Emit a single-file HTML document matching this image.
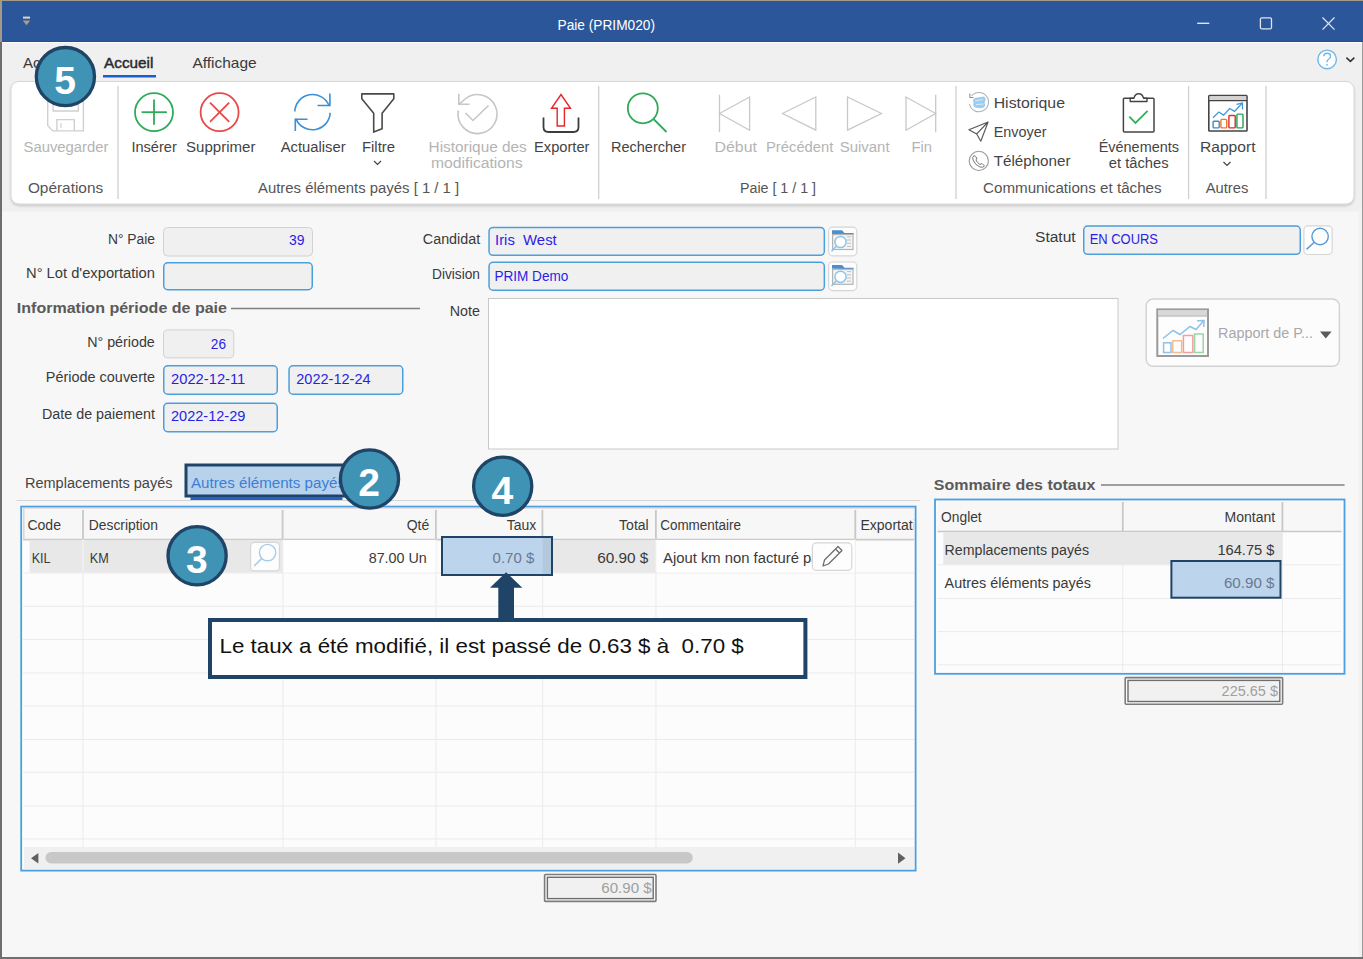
<!DOCTYPE html>
<html><head><meta charset="utf-8"><title>Paie (PRIM020)</title>
<style>html,body{margin:0;padding:0;background:#f7f7f7;overflow:hidden}svg{display:block}text{font-family:"Liberation Sans",sans-serif}</style>
</head><body>
<svg width="1363" height="959" viewBox="0 0 1363 959">
<rect x="0" y="0" width="1363" height="959" fill="#f7f7f7" />
<rect x="0" y="0" width="1363" height="42" fill="#2b579a" />
<rect x="0" y="41" width="1363" height="1" fill="#21509a" />
<rect x="0" y="0" width="1363" height="1" fill="#a39a8c" />
<rect x="0" y="0" width="2" height="42" fill="#a39a8c" />
<g font-family="Liberation Sans, sans-serif">
<text x="557.50" y="29.60" font-size="15.5" fill="#ffffff" font-weight="normal" textLength="97.50" lengthAdjust="spacingAndGlyphs" >Paie (PRIM020)</text>
</g>
<rect x="23" y="16.6" width="7" height="2.0" fill="#dcd4c4" />
<path d="M22.8 20.6 L30.2 20.6 L26.5 25.3 Z" stroke="none" stroke-width="1" fill="#a89c8c" />
<line x1="1197.2" y1="23.3" x2="1209.3" y2="23.3" stroke="#dfe4ee" stroke-width="1.4" />
<rect x="1260.4" y="17.8" width="11.099999999999909" height="11.099999999999998" fill="none" stroke="#dfe4ee" stroke-width="1.3" rx="1.5" />
<line x1="1322.5" y1="17.5" x2="1334.5" y2="29.6" stroke="#dfe4ee" stroke-width="1.3" />
<line x1="1334.5" y1="17.5" x2="1322.5" y2="29.6" stroke="#dfe4ee" stroke-width="1.3" />
<rect x="2" y="42" width="1360" height="169.5" fill="#f0f0f0" />
<rect x="1358.8" y="211.5" width="3.2000000000000455" height="747.5" fill="#f2f2f2" />
<rect x="2" y="42" width="1360" height="1" fill="#fbfbf8" />
<g font-family="Liberation Sans, sans-serif">
<text x="23.00" y="68.20" font-size="15" fill="#3a3a3a" font-weight="normal" >Ac</text>
<text x="104.00" y="68.20" font-size="15" fill="#2a2a2a" font-weight="normal" textLength="49.40" lengthAdjust="spacingAndGlyphs" stroke="#2a2a2a" stroke-width="0.45">Accueil</text>
<text x="192.40" y="68.20" font-size="15" fill="#3a3a3a" font-weight="normal" textLength="64.30" lengthAdjust="spacingAndGlyphs" >Affichage</text>
</g>
<rect x="103" y="75" width="53" height="2.5" fill="#1a5fd0" />
<circle cx="1327.1" cy="59.4" r="9.3" stroke="#70b6e6" stroke-width="1.4" fill="#ffffff" />
<path d="M1323.8 56.2 Q1324 53.3 1327.2 53.3 Q1330.5 53.3 1330.5 56.3 Q1330.5 58.3 1328.3 59.5 Q1327 60.3 1327 62.2" stroke="#70b6e6" stroke-width="1.4" fill="none" />
<circle cx="1327" cy="64.8" r="0.9" stroke="none" stroke-width="1" fill="#70b6e6" />
<path d="M1346.4 57.6 L1350.4 61.4 L1354.4 57.6" stroke="#333" stroke-width="1.5" fill="none" />
<defs><filter id="sh" x="-5%" y="-20%" width="110%" height="140%"><feDropShadow dx="0" dy="1.5" stdDeviation="1.2" flood-color="#000" flood-opacity="0.18"/></filter></defs>
<rect x="11" y="81.5" width="1343" height="122.5" fill="#ffffff" stroke="#d6d6d6" stroke-width="1" rx="8" filter="url(#sh)"/>
<line x1="118" y1="86" x2="118" y2="199" stroke="#d0d0d0" stroke-width="1.3" />
<line x1="598.7" y1="86" x2="598.7" y2="199" stroke="#d0d0d0" stroke-width="1.3" />
<line x1="956" y1="86" x2="956" y2="199" stroke="#d0d0d0" stroke-width="1.3" />
<line x1="1188.6" y1="86" x2="1188.6" y2="199" stroke="#d0d0d0" stroke-width="1.3" />
<line x1="1266" y1="86" x2="1266" y2="199" stroke="#d0d0d0" stroke-width="1.3" />
<g font-family="Liberation Sans, sans-serif">
<text x="23.50" y="151.90" font-size="14" fill="#b4b4b4" font-weight="normal" textLength="85.00" lengthAdjust="spacingAndGlyphs" >Sauvegarder</text>
<text x="27.90" y="193.00" font-size="14" fill="#555" font-weight="normal" textLength="75.30" lengthAdjust="spacingAndGlyphs" >Opérations</text>
<text x="131.40" y="151.50" font-size="14" fill="#444444" font-weight="normal" textLength="45.40" lengthAdjust="spacingAndGlyphs" >Insérer</text>
<text x="186.00" y="151.50" font-size="14" fill="#444444" font-weight="normal" textLength="69.40" lengthAdjust="spacingAndGlyphs" >Supprimer</text>
<text x="280.70" y="151.50" font-size="14" fill="#444444" font-weight="normal" textLength="64.90" lengthAdjust="spacingAndGlyphs" >Actualiser</text>
<text x="362.00" y="151.50" font-size="14" fill="#444444" font-weight="normal" textLength="33.00" lengthAdjust="spacingAndGlyphs" >Filtre</text>
<text x="428.60" y="151.50" font-size="14" fill="#b4b4b4" font-weight="normal" textLength="98.20" lengthAdjust="spacingAndGlyphs" >Historique des</text>
<text x="431.00" y="168.00" font-size="14" fill="#b4b4b4" font-weight="normal" textLength="91.70" lengthAdjust="spacingAndGlyphs" >modifications</text>
<text x="534.00" y="151.50" font-size="14" fill="#444444" font-weight="normal" textLength="55.50" lengthAdjust="spacingAndGlyphs" >Exporter</text>
<text x="258.00" y="193.00" font-size="14" fill="#555" font-weight="normal" textLength="201.20" lengthAdjust="spacingAndGlyphs" >Autres éléments payés [ 1 / 1 ]</text>
<text x="611.00" y="151.50" font-size="14" fill="#444444" font-weight="normal" textLength="75.00" lengthAdjust="spacingAndGlyphs" >Rechercher</text>
<text x="714.50" y="151.70" font-size="14" fill="#b4b4b4" font-weight="normal" textLength="42.40" lengthAdjust="spacingAndGlyphs" >Début</text>
<text x="766.00" y="151.70" font-size="14" fill="#b4b4b4" font-weight="normal" textLength="67.40" lengthAdjust="spacingAndGlyphs" >Précédent</text>
<text x="839.70" y="151.70" font-size="14" fill="#b4b4b4" font-weight="normal" textLength="49.90" lengthAdjust="spacingAndGlyphs" >Suivant</text>
<text x="911.50" y="151.70" font-size="14" fill="#b4b4b4" font-weight="normal" textLength="20.50" lengthAdjust="spacingAndGlyphs" >Fin</text>
<text x="740.00" y="193.00" font-size="14" fill="#555" font-weight="normal" textLength="76.00" lengthAdjust="spacingAndGlyphs" >Paie [ 1 / 1 ]</text>
<text x="993.70" y="107.50" font-size="14" fill="#444444" font-weight="normal" textLength="71.30" lengthAdjust="spacingAndGlyphs" >Historique</text>
<text x="993.70" y="136.80" font-size="14" fill="#444444" font-weight="normal" textLength="52.80" lengthAdjust="spacingAndGlyphs" >Envoyer</text>
<text x="993.70" y="166.00" font-size="14" fill="#444444" font-weight="normal" textLength="76.80" lengthAdjust="spacingAndGlyphs" >Téléphoner</text>
<text x="1098.70" y="151.60" font-size="14" fill="#444444" font-weight="normal" textLength="80.30" lengthAdjust="spacingAndGlyphs" >Événements</text>
<text x="1108.80" y="168.00" font-size="14" fill="#444444" font-weight="normal" textLength="59.80" lengthAdjust="spacingAndGlyphs" >et tâches</text>
<text x="983.00" y="192.50" font-size="14" fill="#555" font-weight="normal" textLength="178.60" lengthAdjust="spacingAndGlyphs" >Communications et tâches</text>
<text x="1200.00" y="151.60" font-size="14" fill="#444444" font-weight="normal" textLength="55.50" lengthAdjust="spacingAndGlyphs" >Rapport</text>
<text x="1205.70" y="192.50" font-size="14" fill="#555" font-weight="normal" textLength="42.70" lengthAdjust="spacingAndGlyphs" >Autres</text>
</g>
<path d="M374 161 L377.5 164.5 L381 161" stroke="#444" stroke-width="1.2" fill="none" />
<path d="M1223.5 162 L1227 165.5 L1230.5 162" stroke="#444" stroke-width="1.2" fill="none" />
<path d="M47.7 94 L83.4 94 L83.4 130.9 L52.7 130.9 L47.7 125.5 Z" stroke="#d0d0d0" stroke-width="1.4" fill="none" />
<path d="M53.1 94 L53.1 111 L78.3 111 L78.3 94" stroke="#d0d0d0" stroke-width="1.4" fill="none" />
<path d="M56.9 130.9 L56.9 119.6 L74.3 119.6 L74.3 130.9" stroke="#d0d0d0" stroke-width="1.4" fill="none" />
<line x1="60.9" y1="123.2" x2="60.9" y2="128.1" stroke="#d0d0d0" stroke-width="1.2" />
<circle cx="154" cy="112.2" r="19" stroke="#2faa58" stroke-width="1.8" fill="none" />
<line x1="141.6" y1="112.2" x2="166.9" y2="112.2" stroke="#2faa58" stroke-width="1.8" />
<line x1="154" y1="99.4" x2="154" y2="124.7" stroke="#2faa58" stroke-width="1.8" />
<circle cx="219.6" cy="112.2" r="19" stroke="#e8494b" stroke-width="1.8" fill="none" />
<line x1="210" y1="102.6" x2="229.2" y2="121.8" stroke="#e8494b" stroke-width="1.8" />
<line x1="229.2" y1="102.6" x2="210" y2="121.8" stroke="#e8494b" stroke-width="1.8" />
<path d="M294.8 111.5 A17.8 17.8 0 0 1 328.9 105.2 L329.9 105.5" stroke="#3a90d6" stroke-width="1.6" fill="none" />
<path d="M330.2 112.8 A17.8 17.8 0 0 1 296.2 119.3 L295.3 119.3" stroke="#3a90d6" stroke-width="1.6" fill="none" />
<path d="M329.9 93.6 L329.9 105.5 L317.5 105.5" stroke="#3a90d6" stroke-width="1.6" fill="none" />
<path d="M295.3 131 L295.3 119.3 L307.5 119.3" stroke="#3a90d6" stroke-width="1.6" fill="none" />
<path d="M361.8 93.9 L393.8 93.9 L393.8 98.7 L382.1 113.2 L382.1 128.8 L373.7 132.1 L373.7 113.2 L361.8 98.7 Z" stroke="#4a4a4a" stroke-width="1.6" fill="none" stroke-linejoin="round"/>
<path d="M458.3 110.5 A19.5 19.5 0 1 0 464.5 99.5 L459 104.3" stroke="#c6c6c6" stroke-width="1.6" fill="none" />
<path d="M458.8 93.8 L458.8 104.3 L469.5 104.3" stroke="#c6c6c6" stroke-width="1.6" fill="none" />
<path d="M465.5 113 L473 120.5 L488.5 105.5" stroke="#c6c6c6" stroke-width="1.6" fill="none" />
<path d="M561 94.5 L570.5 108.3 L564.4 108.3 L564.4 126 L557.2 126 L557.2 108.3 L551.5 108.3 Z" stroke="#e8262a" stroke-width="1.4" fill="none" stroke-linejoin="miter"/>
<path d="M543.5 117.5 L543.5 127 Q543.5 132 548.5 132 L573.5 132 Q578.5 132 578.5 127 L578.5 117.5" stroke="#3d3d3d" stroke-width="1.8" fill="none" />
<circle cx="642.8" cy="108.3" r="15" stroke="#2faa58" stroke-width="1.8" fill="none" />
<line x1="653.5" y1="119" x2="666.5" y2="132" stroke="#2faa58" stroke-width="1.8" />
<line x1="719.5" y1="94.8" x2="719.5" y2="132.2" stroke="#c8c8c8" stroke-width="1.3" />
<path d="M719.5 113.5 L749.6 97 L749.6 130.2 Z" stroke="#c8c8c8" stroke-width="1.3" fill="none" stroke-linejoin="miter"/>
<path d="M782.5 113.5 L815.8 97 L815.8 130.2 Z" stroke="#c8c8c8" stroke-width="1.3" fill="none" />
<path d="M881.5 113.5 L847.5 97 L847.5 130.2 Z" stroke="#c8c8c8" stroke-width="1.3" fill="none" />
<line x1="935.7" y1="94.8" x2="935.7" y2="132.2" stroke="#c8c8c8" stroke-width="1.3" />
<path d="M935.7 113.5 L906 97 L906 130.2 Z" stroke="#c8c8c8" stroke-width="1.3" fill="none" />
<path d="M971.5 96 A9.6 9.6 0 1 1 969.5 104" stroke="#b0b0b0" stroke-width="1.1" fill="none" />
<path d="M969.8 93.5 L969.8 97.5 L973.5 97.5" stroke="#888" stroke-width="1" fill="none" />
<path d="M973 100 Q974 97 978 97.5 L984 96.5 Q986 97.5 985.5 100 L984.5 103 Q986 105 984 107.5 Q980 109 975 107.5 Q972.5 106 973.5 103.5 Z" stroke="none" stroke-width="1" fill="#9ccdf0" />
<path d="M975 101 L983 99.5 M976 104.5 L983.5 104" stroke="#d8ecfa" stroke-width="1" fill="none" />
<path d="M988.1 122 L968.9 129.7 L976.7 133.9 L980.8 141.2 Z M976.7 133.9 L988.1 122" stroke="#555" stroke-width="1.1" fill="none" stroke-linejoin="round"/>
<circle cx="978.8" cy="160.9" r="9.6" stroke="#999" stroke-width="1.1" fill="none" />
<path d="M974 155.5 Q972 157 973 160 Q975 165 980 167 Q983 168 984.5 166 L982 163.5 L980 164.5 Q977 162.5 976 160 L977 158 Z" stroke="#777" stroke-width="1" fill="none" />
<rect x="1123.4" y="98.2" width="30.59999999999991" height="33.8" fill="none" stroke="#444" stroke-width="1.5" rx="1" />
<path d="M1130.2 98.2 L1130.2 101.5 L1147 101.5 L1147 98.2 L1143.5 98.2 Q1142.5 93.8 1138.7 93.8 Q1134.9 93.8 1134 98.2 Z" stroke="#444" stroke-width="1.4" fill="#fff" stroke-linejoin="round"/>
<path d="M1129.3 116.6 L1135.5 123 L1147.6 110.8" stroke="#2cb45a" stroke-width="1.8" fill="none" />
<rect x="1208.8" y="95.5" width="38.200000000000045" height="35.5" fill="#ffffff" stroke="#444" stroke-width="1.6" rx="0.8" />
<rect x="1209.6" y="96.3" width="36.600000000000136" height="4.0" fill="#d4d2d0" />
<line x1="1208.8" y1="100.6" x2="1247" y2="100.6" stroke="#444" stroke-width="1.1" />
<path d="M1213 117.7 L1218.8 112 L1223.6 115.1 L1229.7 108.5 L1234.5 111.4 L1242.4 103" stroke="#3f98d8" stroke-width="1.3" fill="none" />
<path d="M1236.5 104.3 L1242.4 103 L1242.6 109.5" stroke="#3f98d8" stroke-width="1.3" fill="none" />
<rect x="1213.1" y="121.2" width="6.100000000000136" height="6.700000000000003" fill="none" stroke="#3d8ad0" stroke-width="1.4" rx="0.8" />
<rect x="1220.9" y="119.4" width="5.7999999999999545" height="8.5" fill="none" stroke="#ee7a28" stroke-width="1.4" rx="0.8" />
<rect x="1228.9" y="115.5" width="6.2999999999999545" height="12.400000000000006" fill="none" stroke="#e42a2a" stroke-width="1.4" rx="0.8" />
<rect x="1236.9" y="114.1" width="6.099999999999909" height="13.800000000000011" fill="none" stroke="#22a450" stroke-width="1.4" rx="0.8" />
<rect x="163.5" y="227.5" width="149.0" height="28.5" fill="#f0f0f0" stroke="#d2d2d2" stroke-width="1" rx="4" />
<rect x="163.75" y="262.75" width="148.5" height="27.0" fill="#f0f0f0" stroke="#4b9fdc" stroke-width="1.5" rx="4" />
<rect x="163.5" y="329.9" width="70.30000000000001" height="28.0" fill="#f0f0f0" stroke="#d2d2d2" stroke-width="1" rx="4" />
<rect x="163.75" y="365.75" width="113.5" height="28.5" fill="#f0f0f0" stroke="#4b9fdc" stroke-width="1.5" rx="4" />
<rect x="289.05" y="365.75" width="113.69999999999999" height="28.5" fill="#f0f0f0" stroke="#4b9fdc" stroke-width="1.5" rx="4" />
<rect x="163.75" y="403.25" width="113.5" height="28.399999999999977" fill="#f0f0f0" stroke="#4b9fdc" stroke-width="1.5" rx="4" />
<rect x="489.05" y="227.45" width="335.3" height="27.900000000000034" fill="#f0f0f0" stroke="#4b9fdc" stroke-width="1.5" rx="4" />
<rect x="489.05" y="262.25" width="335.3" height="27.899999999999977" fill="#f0f0f0" stroke="#4b9fdc" stroke-width="1.5" rx="4" />
<rect x="828.6" y="227.2" width="28.199999999999932" height="28.599999999999994" fill="#fdfdfd" stroke="#d6d6d6" stroke-width="1.2" rx="4" />
<rect x="828.6" y="262.0" width="28.199999999999932" height="28.599999999999966" fill="#fdfdfd" stroke="#d6d6d6" stroke-width="1.2" rx="4" />
<rect x="488.5" y="298.5" width="629.5" height="150.5" fill="#ffffff" stroke="#c9c9c9" stroke-width="1" />
<rect x="1083.75" y="226.05" width="216.5" height="28.299999999999983" fill="#f0f0f0" stroke="#4b9fdc" stroke-width="1.5" rx="4" />
<rect x="1303.8999999999999" y="225.9" width="28.300000000000182" height="28.599999999999994" fill="#fdfdfd" stroke="#d6d6d6" stroke-width="1.2" rx="4" />
<g font-family="Liberation Sans, sans-serif">
<text x="108.00" y="243.50" font-size="14" fill="#3a3a3a" font-weight="normal" textLength="47.00" lengthAdjust="spacingAndGlyphs" >N° Paie</text>
<text x="288.90" y="244.60" font-size="14" fill="#2a1ee6" font-weight="normal" textLength="15.50" lengthAdjust="spacingAndGlyphs" >39</text>
<text x="26.00" y="277.50" font-size="14" fill="#3a3a3a" font-weight="normal" textLength="129.00" lengthAdjust="spacingAndGlyphs" >N° Lot d'exportation</text>
<text x="16.80" y="313.00" font-size="14.5" fill="#5a5a5a" font-weight="bold" textLength="210.20" lengthAdjust="spacingAndGlyphs" >Information période de paie</text>
<text x="87.20" y="347.00" font-size="14" fill="#3a3a3a" font-weight="normal" textLength="67.60" lengthAdjust="spacingAndGlyphs" >N° période</text>
<text x="210.80" y="348.50" font-size="14" fill="#2a1ee6" font-weight="normal" textLength="15.20" lengthAdjust="spacingAndGlyphs" >26</text>
<text x="45.80" y="382.40" font-size="14" fill="#3a3a3a" font-weight="normal" textLength="109.20" lengthAdjust="spacingAndGlyphs" >Période couverte</text>
<text x="171.00" y="384.00" font-size="14" fill="#2a1ee6" font-weight="normal" textLength="74.30" lengthAdjust="spacingAndGlyphs" >2022-12-11</text>
<text x="296.30" y="384.00" font-size="14" fill="#2a1ee6" font-weight="normal" textLength="74.30" lengthAdjust="spacingAndGlyphs" >2022-12-24</text>
<text x="42.00" y="419.40" font-size="14" fill="#3a3a3a" font-weight="normal" textLength="113.00" lengthAdjust="spacingAndGlyphs" >Date de paiement</text>
<text x="171.00" y="421.00" font-size="14" fill="#2a1ee6" font-weight="normal" textLength="74.30" lengthAdjust="spacingAndGlyphs" >2022-12-29</text>
<text x="422.80" y="243.60" font-size="14" fill="#3a3a3a" font-weight="normal" textLength="57.40" lengthAdjust="spacingAndGlyphs" >Candidat</text>
<text x="495.00" y="245.30" font-size="14" fill="#2a1ee6" font-weight="normal" textLength="61.70" lengthAdjust="spacingAndGlyphs" xml:space="preserve">Iris  West</text>
<text x="432.00" y="279.00" font-size="14" fill="#3a3a3a" font-weight="normal" textLength="48.00" lengthAdjust="spacingAndGlyphs" >Division</text>
<text x="494.40" y="280.50" font-size="14" fill="#2a1ee6" font-weight="normal" textLength="73.90" lengthAdjust="spacingAndGlyphs" >PRIM Demo</text>
<text x="449.80" y="315.50" font-size="14" fill="#3a3a3a" font-weight="normal" textLength="30.20" lengthAdjust="spacingAndGlyphs" >Note</text>
<text x="1035.00" y="242.30" font-size="14" fill="#3a3a3a" font-weight="normal" textLength="40.70" lengthAdjust="spacingAndGlyphs" >Statut</text>
<text x="1089.70" y="243.70" font-size="14" fill="#2a1ee6" font-weight="normal" textLength="68.30" lengthAdjust="spacingAndGlyphs" >EN COURS</text>
</g>
<line x1="231" y1="308.5" x2="420" y2="308.5" stroke="#808080" stroke-width="1.5" />
<path d="M832 234 L832 230.2 L842 230.2 L844.5 233 L853.6 233 L853.6 234.5 Z" stroke="none" stroke-width="1" fill="#4a8fd0" />
<rect x="832.6" y="234.5" width="20.399999999999977" height="15.0" fill="#f4f4f4" stroke="#b4b4b4" stroke-width="1.2" />
<line x1="847" y1="236.8" x2="851" y2="236.8" stroke="#c0c0c0" stroke-width="1" />
<line x1="847" y1="240" x2="851" y2="240" stroke="#c0c0c0" stroke-width="1" />
<line x1="847" y1="243.2" x2="851" y2="243.2" stroke="#c0c0c0" stroke-width="1" />
<line x1="847" y1="246.4" x2="851" y2="246.4" stroke="#c0c0c0" stroke-width="1" />
<circle cx="840.5" cy="242" r="5.6" stroke="#8cc4ec" stroke-width="1.5" fill="#ffffff" />
<line x1="836.5" y1="246" x2="831.5" y2="251.2" stroke="#8cc4ec" stroke-width="1.6" />
<path d="M832 268.8 L832 265.0 L842 265.0 L844.5 267.8 L853.6 267.8 L853.6 269.3 Z" stroke="none" stroke-width="1" fill="#4a8fd0" />
<rect x="832.6" y="269.3" width="20.399999999999977" height="15.0" fill="#f4f4f4" stroke="#b4b4b4" stroke-width="1.2" />
<line x1="847" y1="271.6" x2="851" y2="271.6" stroke="#c0c0c0" stroke-width="1" />
<line x1="847" y1="274.8" x2="851" y2="274.8" stroke="#c0c0c0" stroke-width="1" />
<line x1="847" y1="278.0" x2="851" y2="278.0" stroke="#c0c0c0" stroke-width="1" />
<line x1="847" y1="281.2" x2="851" y2="281.2" stroke="#c0c0c0" stroke-width="1" />
<circle cx="840.5" cy="276.8" r="5.6" stroke="#8cc4ec" stroke-width="1.5" fill="#ffffff" />
<line x1="836.5" y1="280.8" x2="831.5" y2="286.0" stroke="#8cc4ec" stroke-width="1.6" />
<circle cx="1320.1" cy="236.5" r="8.2" stroke="#5a9ad6" stroke-width="1.4" fill="none" />
<line x1="1314.3" y1="242.3" x2="1306.5" y2="249.4" stroke="#5a9ad6" stroke-width="1.5" />
<rect x="1146.2" y="299" width="193.20000000000005" height="67.30000000000001" fill="#fcfcfc" stroke="#d2d2d2" stroke-width="1.4" rx="7" />
<rect x="1157.3" y="309.4" width="50.700000000000045" height="46.60000000000002" fill="#fdfdfd" stroke="#9a9a9a" stroke-width="2" />
<rect x="1158.3" y="310.4" width="48.700000000000045" height="5.100000000000023" fill="#d8d8d8" />
<line x1="1157.3" y1="316" x2="1208" y2="316" stroke="#a8a8a8" stroke-width="1.2" />
<path d="M1163 338.5 L1173 330.5 L1180 334.5 L1190 326.5 L1196 329.5 L1204 320.5" stroke="#8ec2ea" stroke-width="1.5" fill="none" />
<path d="M1197 320.8 L1204 320.5 L1203.8 327" stroke="#8ec2ea" stroke-width="1.5" fill="none" />
<rect x="1163.6" y="342.8" width="7.400000000000091" height="9.699999999999989" fill="none" stroke="#8ec2ea" stroke-width="1.5" />
<rect x="1172.8" y="340.8" width="8.799999999999955" height="11.699999999999989" fill="none" stroke="#f5bc90" stroke-width="1.5" />
<rect x="1183.4" y="335.5" width="9.399999999999864" height="17.0" fill="none" stroke="#f0a0a0" stroke-width="1.5" />
<rect x="1194.6" y="334" width="8.600000000000136" height="18.5" fill="none" stroke="#9cd4a6" stroke-width="1.5" />
<g font-family="Liberation Sans, sans-serif">
<text x="1218.00" y="338.00" font-size="14" fill="#a8a8a8" font-weight="normal" textLength="95.00" lengthAdjust="spacingAndGlyphs" >Rapport de P...</text>
</g>
<path d="M1320 331.5 L1331.6 331.5 L1325.8 338.6 Z" stroke="none" stroke-width="1" fill="#5a5a5a" />
<line x1="16.6" y1="500.5" x2="920" y2="500.5" stroke="#d4d4d4" stroke-width="1" />
<rect x="186" y="465" width="164" height="31" fill="#b9d2ec" stroke="#1f4468" stroke-width="3" />
<g font-family="Liberation Sans, sans-serif">
<text x="25.00" y="488.00" font-size="14" fill="#444" font-weight="normal" textLength="147.50" lengthAdjust="spacingAndGlyphs" >Remplacements payés</text>
<text x="191.00" y="488.00" font-size="14" fill="#3a7fd6" font-weight="normal" textLength="154.00" lengthAdjust="spacingAndGlyphs" >Autres éléments payés</text>
</g>
<rect x="190.5" y="497" width="151.89999999999998" height="3" fill="#2462c8" />
<rect x="21.2" y="506.6" width="894.4" height="364.0" fill="#fcfcfc" stroke="#4a9fe0" stroke-width="1.8" />
<rect x="23" y="508.5" width="891" height="31.5" fill="#f7f7f7" />
<line x1="23" y1="539.6" x2="914" y2="539.6" stroke="#cacaca" stroke-width="1.8" />
<line x1="23" y1="508.5" x2="914" y2="508.5" stroke="#e8e0e0" stroke-width="1" />
<line x1="23.8" y1="508.5" x2="23.8" y2="540" stroke="#d4d4d4" stroke-width="1.4" />
<line x1="83" y1="510" x2="83" y2="539" stroke="#c8c8c8" stroke-width="1.8" />
<line x1="282.6" y1="510" x2="282.6" y2="539" stroke="#c8c8c8" stroke-width="1.8" />
<line x1="435.9" y1="510" x2="435.9" y2="539" stroke="#c8c8c8" stroke-width="1.8" />
<line x1="542.4" y1="510" x2="542.4" y2="539" stroke="#c8c8c8" stroke-width="1.8" />
<line x1="655.9" y1="510" x2="655.9" y2="539" stroke="#c8c8c8" stroke-width="1.8" />
<line x1="855.3" y1="510" x2="855.3" y2="539" stroke="#c8c8c8" stroke-width="1.8" />
<line x1="83" y1="539" x2="83" y2="847" stroke="#ebebeb" stroke-width="1" />
<line x1="283" y1="539" x2="283" y2="847" stroke="#ebebeb" stroke-width="1" />
<line x1="436" y1="539" x2="436" y2="847" stroke="#ebebeb" stroke-width="1" />
<line x1="542.6" y1="539" x2="542.6" y2="847" stroke="#ebebeb" stroke-width="1" />
<line x1="656" y1="539" x2="656" y2="847" stroke="#ebebeb" stroke-width="1" />
<line x1="855.3" y1="539" x2="855.3" y2="847" stroke="#ebebeb" stroke-width="1" />
<line x1="23" y1="573" x2="914" y2="573" stroke="#ebebeb" stroke-width="1" />
<line x1="23" y1="606.3" x2="914" y2="606.3" stroke="#ebebeb" stroke-width="1" />
<line x1="23" y1="639.5" x2="914" y2="639.5" stroke="#ebebeb" stroke-width="1" />
<line x1="23" y1="673" x2="914" y2="673" stroke="#ebebeb" stroke-width="1" />
<line x1="23" y1="706" x2="914" y2="706" stroke="#ebebeb" stroke-width="1" />
<line x1="23" y1="739.5" x2="914" y2="739.5" stroke="#ebebeb" stroke-width="1" />
<line x1="23" y1="772.3" x2="914" y2="772.3" stroke="#ebebeb" stroke-width="1" />
<line x1="23" y1="806" x2="914" y2="806" stroke="#ebebeb" stroke-width="1" />
<line x1="23" y1="839" x2="914" y2="839" stroke="#ebebeb" stroke-width="1" />
<rect x="29.6" y="540" width="252.9" height="32.5" fill="#e8e8e8" />
<line x1="83" y1="540" x2="83" y2="572.5" stroke="#f6f6f6" stroke-width="1" />
<rect x="543" y="540" width="112.5" height="32.5" fill="#e8e8e8" />
<rect x="656.5" y="540" width="198.29999999999995" height="32.5" fill="#fefefe" />
<rect x="283.5" y="540" width="152.0" height="32.5" fill="#fefefe" />
<rect x="250.6" y="542.3000000000001" width="28.799999999999983" height="28.59999999999991" fill="#fdfdfd" stroke="#d6d6d6" stroke-width="1.2" rx="4" />
<circle cx="267.6" cy="552.6" r="8.2" stroke="#a8cce8" stroke-width="1.4" fill="none" />
<line x1="261.8" y1="558.4" x2="254.2" y2="566" stroke="#a8cce8" stroke-width="1.6" />
<rect x="812.4" y="542.9" width="39.39999999999998" height="27.5" fill="#fdfdfd" stroke="#d6d6d6" stroke-width="1.2" rx="4" />
<path d="M823 566 L824.5 560 L838 546.5 L842 550.5 L828.5 564 Z M835.5 549 L839.5 553" stroke="#6a6a6a" stroke-width="1.2" fill="none" stroke-linejoin="round"/>
<rect x="24" y="847" width="890" height="22" fill="#f0f0f0" />
<rect x="45.4" y="852" width="647.4" height="11.5" fill="#c8c8c8" rx="5.75" />
<path d="M38.4 852.9 L31 858.2 L38.4 863.6 Z" stroke="none" stroke-width="1" fill="#606060" />
<path d="M898 852.6 L905.5 858.2 L898 863.8 Z" stroke="none" stroke-width="1" fill="#606060" />
<g font-family="Liberation Sans, sans-serif">
<text x="27.40" y="529.60" font-size="14" fill="#3a3a3a" font-weight="normal" textLength="33.60" lengthAdjust="spacingAndGlyphs" >Code</text>
<text x="88.80" y="529.60" font-size="14" fill="#3a3a3a" font-weight="normal" textLength="69.20" lengthAdjust="spacingAndGlyphs" >Description</text>
<text x="429.30" y="529.60" font-size="14" fill="#3a3a3a" font-weight="normal" text-anchor="end" >Qté</text>
<text x="536.30" y="529.60" font-size="14" fill="#3a3a3a" font-weight="normal" text-anchor="end" >Taux</text>
<text x="648.70" y="529.60" font-size="14" fill="#3a3a3a" font-weight="normal" text-anchor="end" >Total</text>
<text x="660.20" y="529.60" font-size="14" fill="#3a3a3a" font-weight="normal" textLength="80.80" lengthAdjust="spacingAndGlyphs" >Commentaire</text>
<clipPath id="cpx"><rect x="856" y="505" width="57.5" height="40"/></clipPath>
<text x="860.50" y="529.60" font-size="14" fill="#3a3a3a" font-weight="normal" clip-path="url(#cpx)">Exportation</text>
<text x="31.70" y="563.30" font-size="14" fill="#3a3a3a" font-weight="normal" textLength="18.90" lengthAdjust="spacingAndGlyphs" >KIL</text>
<text x="89.70" y="563.30" font-size="14" fill="#3a3a3a" font-weight="normal" textLength="19.00" lengthAdjust="spacingAndGlyphs" >KM</text>
<text x="368.70" y="563.30" font-size="14" fill="#3a3a3a" font-weight="normal" textLength="58.10" lengthAdjust="spacingAndGlyphs" >87.00 Un</text>
<text x="597.20" y="563.30" font-size="14" fill="#3a3a3a" font-weight="normal" textLength="51.20" lengthAdjust="spacingAndGlyphs" >60.90 $</text>
<clipPath id="cpc"><rect x="656" y="540" width="156" height="32"/></clipPath>
<text x="663.00" y="563.30" font-size="14" fill="#3a3a3a" font-weight="normal" textLength="156.50" lengthAdjust="spacingAndGlyphs" clip-path="url(#cpc)">Ajout km non facturé pa</text>
</g>
<rect x="544.5999999999999" y="874.5" width="111.40000000000009" height="26.90000000000009" fill="#fbfbfb" stroke="#7c7c7c" stroke-width="1.6" rx="1" />
<rect x="547.4" y="877.3000000000001" width="105.79999999999995" height="21.299999999999955" fill="#f1f1f1" stroke="#6e6e6e" stroke-width="1.4" />
<g font-family="Liberation Sans, sans-serif">
<text x="601.30" y="892.80" font-size="14" fill="#a0a0a0" font-weight="normal" textLength="50.40" lengthAdjust="spacingAndGlyphs" >60.90 $</text>
</g>
<rect x="442" y="537" width="110" height="38" fill="#bcd4ec" stroke="#1f4468" stroke-width="2" />
<g font-family="Liberation Sans, sans-serif">
<rect x="542.6" y="538" width="8.399999999999977" height="36" fill="#b3c9de" />
<text x="492.60" y="563.20" font-size="14" fill="#6a7a90" font-weight="normal" textLength="41.70" lengthAdjust="spacingAndGlyphs" >0.70 $</text>
</g>
<path d="M506.1 572.2 L522.3 587.7 L514 587.7 L514 619 L498.3 619 L498.3 587.7 L490 587.7 Z" stroke="none" stroke-width="1" fill="#1f4468" />
<rect x="210" y="620" width="595.4" height="57" fill="#ffffff" stroke="#1f4468" stroke-width="4" />
<g font-family="Liberation Sans, sans-serif">
<text x="219.50" y="653.00" font-size="21" fill="#111" font-weight="normal" textLength="524.20" lengthAdjust="spacingAndGlyphs" xml:space="preserve">Le taux a été modifié, il est passé de 0.63 $ à  0.70 $</text>
</g>
<g font-family="Liberation Sans, sans-serif">
<text x="933.80" y="489.60" font-size="14.5" fill="#5a5a5a" font-weight="bold" textLength="161.50" lengthAdjust="spacingAndGlyphs" >Sommaire des totaux</text>
</g>
<line x1="1101" y1="485" x2="1344.6" y2="485" stroke="#808080" stroke-width="1.5" />
<rect x="935" y="499.5" width="409.5" height="174.29999999999995" fill="#fcfcfc" stroke="#4a9fe0" stroke-width="1.8" />
<rect x="937.6" y="501.5" width="403.80000000000007" height="30.0" fill="#f7f7f7" />
<line x1="937.6" y1="531.5" x2="1341.4" y2="531.5" stroke="#c8c8c8" stroke-width="1.5" />
<line x1="1122.8" y1="502" x2="1122.8" y2="531.5" stroke="#c8c8c8" stroke-width="1.8" />
<line x1="1282.4" y1="502" x2="1282.4" y2="531.5" stroke="#c8c8c8" stroke-width="1.8" />
<line x1="1122.8" y1="532" x2="1122.8" y2="672" stroke="#ebebeb" stroke-width="1" />
<line x1="1282.4" y1="532" x2="1282.4" y2="672" stroke="#ebebeb" stroke-width="1" />
<line x1="937.6" y1="564.8" x2="1341.4" y2="564.8" stroke="#ebebeb" stroke-width="1" />
<line x1="937.6" y1="598.5" x2="1341.4" y2="598.5" stroke="#ebebeb" stroke-width="1" />
<line x1="937.6" y1="631.6" x2="1341.4" y2="631.6" stroke="#ebebeb" stroke-width="1" />
<line x1="937.6" y1="664.8" x2="1341.4" y2="664.8" stroke="#ebebeb" stroke-width="1" />
<rect x="943.3" y="532.5" width="338.70000000000005" height="32.0" fill="#e8e8e8" />
<rect x="1171.4" y="561" width="109.09999999999991" height="36.700000000000045" fill="#bcd4ec" stroke="#1f4468" stroke-width="2" />
<g font-family="Liberation Sans, sans-serif">
<text x="941.10" y="522.00" font-size="14" fill="#3a3a3a" font-weight="normal" textLength="40.60" lengthAdjust="spacingAndGlyphs" >Onglet</text>
<text x="1275.20" y="522.00" font-size="14" fill="#3a3a3a" font-weight="normal" text-anchor="end" >Montant</text>
<text x="944.60" y="555.20" font-size="14" fill="#3a3a3a" font-weight="normal" textLength="144.40" lengthAdjust="spacingAndGlyphs" >Remplacements payés</text>
<text x="1217.40" y="555.20" font-size="14" fill="#3a3a3a" font-weight="normal" textLength="57.10" lengthAdjust="spacingAndGlyphs" >164.75 $</text>
<text x="944.60" y="588.30" font-size="14" fill="#3a3a3a" font-weight="normal" textLength="146.40" lengthAdjust="spacingAndGlyphs" >Autres éléments payés</text>
<text x="1223.90" y="588.30" font-size="14" fill="#6a7a90" font-weight="normal" textLength="50.60" lengthAdjust="spacingAndGlyphs" >60.90 $</text>
</g>
<rect x="1125.2" y="677.5999999999999" width="157.4000000000001" height="26.70000000000016" fill="#fbfbfb" stroke="#7c7c7c" stroke-width="1.6" rx="1" />
<rect x="1128.0" y="680.4" width="151.80000000000018" height="21.100000000000023" fill="#f1f1f1" stroke="#6e6e6e" stroke-width="1.4" />
<g font-family="Liberation Sans, sans-serif">
<text x="1221.60" y="696.30" font-size="14" fill="#a0a0a0" font-weight="normal" textLength="56.40" lengthAdjust="spacingAndGlyphs" >225.65 $</text>
</g>
<circle cx="65.4" cy="76.6" r="29.1" stroke="#1f4466" stroke-width="3.3" fill="#3f93b4" />
<text x="65.10000000000001" y="93.89999999999999" font-size="39" font-weight="bold" fill="#ffffff" text-anchor="middle" font-family="Liberation Sans, sans-serif">5</text>
<circle cx="369.5" cy="479" r="29.1" stroke="#1f4466" stroke-width="3.3" fill="#3f93b4" />
<text x="369.2" y="496.3" font-size="39" font-weight="bold" fill="#ffffff" text-anchor="middle" font-family="Liberation Sans, sans-serif">2</text>
<circle cx="197.1" cy="555.8" r="29.1" stroke="#1f4466" stroke-width="3.3" fill="#3f93b4" />
<text x="196.79999999999998" y="573.0999999999999" font-size="39" font-weight="bold" fill="#ffffff" text-anchor="middle" font-family="Liberation Sans, sans-serif">3</text>
<circle cx="502.7" cy="486.2" r="29.1" stroke="#1f4466" stroke-width="3.3" fill="#3f93b4" />
<text x="502.4" y="503.5" font-size="39" font-weight="bold" fill="#ffffff" text-anchor="middle" font-family="Liberation Sans, sans-serif">4</text>
<rect x="0" y="42" width="2" height="917" fill="#6e6e6e" />
<rect x="1362" y="42" width="1" height="917" fill="#9a9a9a" />
<rect x="0" y="957" width="1363" height="2" fill="#707070" />
</svg>
</body></html>
